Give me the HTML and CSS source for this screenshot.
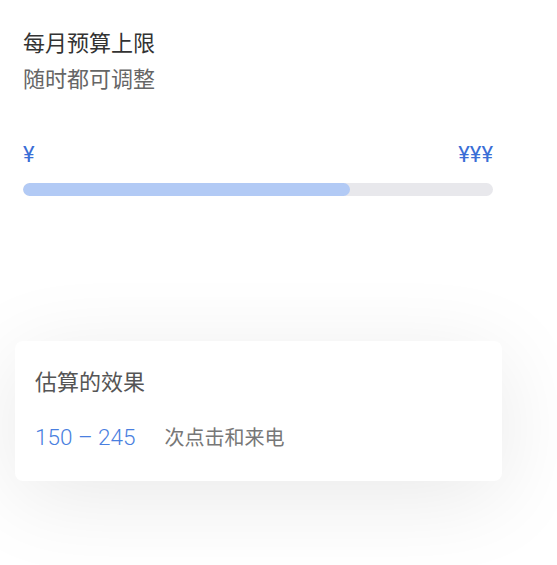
FILE: index.html
```html
<!DOCTYPE html>
<html lang="zh-CN">
<head>
    <meta charset="UTF-8">
    <meta name="viewport" content="width=device-width, initial-scale=1.0">
    <title>每月预算上限</title>
    <link rel="stylesheet" href="styles.css">
</head>
<body>
    <div class="budget">
        <div class="budget-title">每月预算上限</div>
        <div class="budget-sub">随时都可调整</div>

        <div class="range-labels">
            <span>¥</span>
            <span>¥¥¥</span>
        </div>
        <div class="track">
            <div class="fill" style="width: 69.6%"></div>
        </div>
    </div>

    <div class="card">
        <div class="card-title">估算的效果</div>
        <div class="estimate">
            <span class="estimate-num">150 – 245</span>
            <span class="estimate-text">次点击和来电</span>
        </div>
    </div>
</body>
</html>
```

FILE: styles.css
```css
html {
    background-color: #fff;
}
body {
    margin: 0;
    min-height: 565px;
    font-family: Roboto, "Noto Sans CJK SC", sans-serif;
    color: #333;
}
.budget {
    width: 470px;
    padding: 26px 23px 0;
}
.budget-title {
    font-size: 22px;
    line-height: 36px;
    color: #333;
}
.budget-sub {
    font-size: 22px;
    line-height: 36px;
    color: #666;
}
.range-labels {
    display: flex;
    justify-content: space-between;
    margin-top: 43px;
    font-size: 22px;
    line-height: 28px;
    color: #3a6ed6;
}
.track {
    margin-top: 14px;
    height: 13px;
    border-radius: 7px;
    background-color: #e8e8ec;
    overflow: hidden;
}
.fill {
    height: 100%;
    border-radius: 7px;
    background-color: #b2caf5;
}
.card {
    width: 447px;
    margin: 145px 0 0 15px;
    padding: 24px 20px 30px;
    background-color: #fff;
    border-radius: 8px;
    box-shadow: 0 16px 90px rgba(0, 0, 0, 0.09);
}
.card-title {
    font-size: 22px;
    line-height: 36px;
    color: #555;
}
.estimate {
    margin-top: 21px;
    display: flex;
    align-items: baseline;
    gap: 29px;
}
.estimate-num {
    font-size: 22.5px;
    font-weight: 300;
    color: #4a7fe0;
}
.estimate-text {
    font-size: 20px;
    color: #777;
}
```
